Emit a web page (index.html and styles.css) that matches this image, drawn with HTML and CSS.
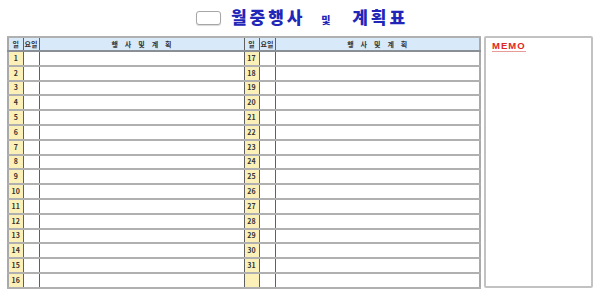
FILE: index.html
```html
<!DOCTYPE html>
<html lang="ko">
<head>
<meta charset="utf-8">
<link rel="stylesheet" href="styles.css">
</head>
<body>
<div class="page">
  <header class="title">
    <span class="title-box"></span>
    <h1 class="title-text">월중행사 <small class="and">및</small> 계획표</h1>
  </header>
  <main class="content">
    <table class="plan">
      <colgroup>
        <col class="c-day"><col class="c-wd"><col class="c-ev">
        <col class="c-day"><col class="c-wd"><col class="c-ev2">
      </colgroup>
      <thead>
        <tr>
          <th class="day">일</th><th class="wd">요일</th><th class="ev">행 사 및 계 획</th>
          <th class="day">일</th><th class="wd">요일</th><th class="ev">행 사 및 계 획</th>
        </tr>
      </thead>
      <tbody id="rows"></tbody>
    </table>
    <aside class="memo">
      <span class="memo-label">MEMO</span>
    </aside>
  </main>
</div>
<script>
  var tb = document.getElementById('rows');
  var html = '';
  for (var i = 1; i <= 16; i++) {
    var j = i + 16;
    html += '<tr><td class="day">' + i + '</td><td class="wd"></td><td class="ev"></td>' +
            '<td class="day">' + (j <= 31 ? j : '') + '</td><td class="wd"></td><td class="ev"></td></tr>';
  }
  tb.innerHTML = html;
</script>
</body>
</html>
```
FILE: styles.css
```css
html, body {
  margin: 0;
  padding: 0;
  background: #ffffff;
}
body {
  font-family: "Noto Sans CJK KR", "Noto Sans", sans-serif;
  width: 600px;
  height: 295px;
  overflow: hidden;
}
.page {
  padding: 0 7px 0 7px;
}
.title {
  height: 36px;
  display: flex;
  align-items: center;
  justify-content: center;
  gap: 10px;
  padding-left: 4px;
}
.title-box {
  width: 23px;
  height: 12px;
  border: 1.5px solid #a6a6a6;
  border-radius: 3px;
  background: #fff;
  box-shadow: 0 1px 1px rgba(0,0,0,0.15);
}
.title-text {
  margin: 0;
  font-size: 17px;
  font-weight: 900;
  color: #2226b8;
  letter-spacing: 3px;
  line-height: 20px;
  white-space: pre;
}
.title-text .and {
  font-size: 10px;
  letter-spacing: 0;
  margin: 0 14px 0 8px;
}
.content {
  display: flex;
  gap: 3px;
  align-items: flex-start;
}
.plan {
  border-collapse: collapse;
  table-layout: fixed;
  width: 472px;
  border: 2px solid #a9a9a9;
}
.c-day { width: 15px; }
.c-wd { width: 16px; }
.c-ev { width: 205px; }
.c-ev2 { width: 205px; }
.plan th, .plan td {
  padding: 0;
  border-top: 2px solid #b0b0b0;
  border-bottom: 2px solid #b0b0b0;
  font-size: 7px;
  line-height: 7px;
  font-weight: 700;
  color: #333;
  text-align: center;
  overflow: hidden;
  white-space: nowrap;
}
.plan thead th {
  height: 12px;
  background: #d8eaf9;
  border-bottom: 2px solid #8a8f96;
  letter-spacing: 0;
}
.plan thead th.ev {
  word-spacing: 5px;
}
.plan tbody td {
  height: 12.8px;
}
.plan .day {
  border-left: 1px solid #606060;
  border-right: 1px solid #606060;
}
.plan tbody td.day {
  background: #fbf1b8;
}
.plan .wd {
  border-right: 1px solid #606060;
}
.plan th:first-child, .plan td:first-child {
  border-left: 2px solid #a9a9a9;
}
.memo {
  width: 107px;
  height: 248px;
  border: 2px solid #c2c2c2;
  border-radius: 2px;
  background: #fff;
  padding: 0;
  line-height: 10px;
}
.memo-label {
  display: block;
  width: fit-content;
  margin: 3px 0 0 6px;
  font-family: "Liberation Sans", Arial, sans-serif;
  font-size: 9.5px;
  font-weight: 700;
  color: #e3261f;
  letter-spacing: 1px;
  border-bottom: 1.5px solid #e79a98;
  line-height: 10px;
}
```
